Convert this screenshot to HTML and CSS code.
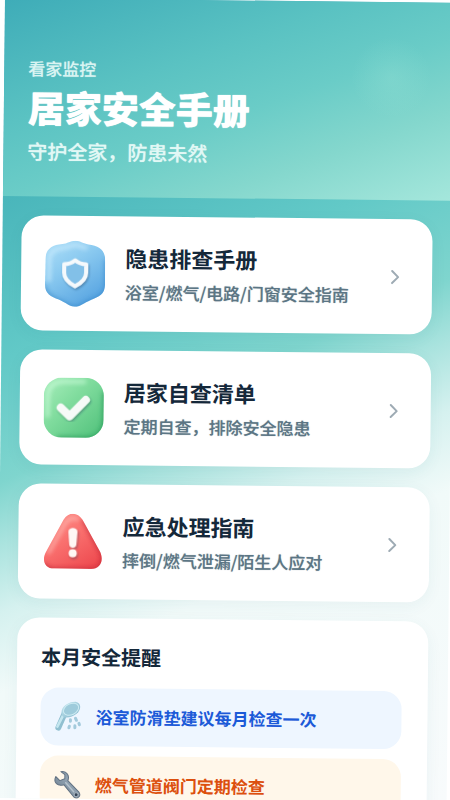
FILE: index.html
```html
<!DOCTYPE html>
<html lang="zh-CN">
<head>
<meta charset="utf-8">
<meta name="viewport" content="width=device-width, initial-scale=1">
<title>居家安全手册</title>
<link rel="stylesheet" href="styles.css">
</head>
<body>
<div class="page">
  <header class="hero">
    <p class="hero-brand">看家监控</p>
    <h1 class="hero-title">居家安全手册</h1>
    <p class="hero-sub">守护全家，防患未然</p>
  </header>
  <main class="content">
    <a class="card guide" href="#hazards">
      <svg class="guide-icon" viewBox="0 0 60 68" aria-hidden="true">
        <defs>
          <linearGradient id="blueFace" x1="0" y1="0" x2=".6" y2="1"><stop offset="0" stop-color="#b0e0f9"/><stop offset=".45" stop-color="#8bcaf0"/><stop offset="1" stop-color="#5aa6e2"/></linearGradient>
          <filter id="soft" x="-20%" y="-20%" width="140%" height="140%"><feGaussianBlur stdDeviation="2"/></filter>
          <filter id="drop" x="-30%" y="-30%" width="160%" height="160%"><feDropShadow dx="1" dy="1.5" stdDeviation=".8" flood-color="#123456" flood-opacity=".4"/></filter>
          <clipPath id="shieldClip"><path d="M30 1C35 1 38 4 43 4.500C54 5.500 60 10 60 21V45C60 54 54 57 46 60C39 63 35 67 30 67C25 67 21 63 14 60C6 57 0 54 0 45V21C0 10 6 5.500 17 4.500C22 4 25 1 30 1Z"/></clipPath>
        </defs>
        <g clip-path="url(#shieldClip)">
          <rect width="60" height="68" fill="url(#blueFace)"/>
          <path d="M61 20V45C61 55 54 58 46 61C39 64 35 68 30 68C25 68 21 64 14 61C6 58 0 54-1 46" fill="none" stroke="#2f80c4" stroke-width="4" opacity=".55" filter="url(#soft)"/>
          <path d="M4 42V21C4 12 10 9 18 8.500L30 5L42 8.500" fill="none" stroke="#d3f0ff" stroke-width="4" opacity=".6" filter="url(#soft)"/>
        </g>
        <path d="M30 20.500C33.500 23.500 37 24.500 41 24.500V33C41 40 36 43.500 30 46.500C24 43.500 19 40 19 33V24.500C23 24.500 26.500 23.500 30 20.500Z" fill="#82c0e8" stroke="#f5f9fc" stroke-width="4" stroke-linejoin="round" filter="url(#drop)"/>
      </svg>
      <span class="guide-text"><strong class="guide-title">隐患排查手册</strong><span class="guide-sub">浴室/燃气/电路/门窗安全指南</span></span>
      <svg class="chevron" viewBox="0 0 28 28" aria-hidden="true"><path d="M12 8L18 14L12 20"/></svg>
    </a>
    <a class="card guide" href="#checklist">
      <svg class="guide-icon" viewBox="0 0 60 68" aria-hidden="true">
        <defs>
          <linearGradient id="greenFace" x1="0" y1="0" x2="1" y2="1"><stop offset="0" stop-color="#a8eebc"/><stop offset=".4" stop-color="#82dd9f"/><stop offset="1" stop-color="#4fc07a"/></linearGradient>
          <clipPath id="tileClip"><rect y="4" width="60" height="60" rx="18"/></clipPath>
        </defs>
        <g clip-path="url(#tileClip)">
          <rect y="4" width="60" height="60" fill="url(#greenFace)"/>
          <path d="M61 18V46Q61 65 42 65H14" fill="none" stroke="#1f9150" stroke-width="5" opacity=".6" filter="url(#soft)"/>
          <path d="M4 44V24Q4 8 20 8H42" fill="none" stroke="#d3ffe0" stroke-width="4" opacity=".6" filter="url(#soft)"/>
        </g>
        <path d="M17 34L26 42.500L42 26" fill="none" stroke="#f6faf8" stroke-width="8" stroke-linecap="round" stroke-linejoin="round" filter="url(#drop)"/>
      </svg>
      <span class="guide-text"><strong class="guide-title">居家自查清单</strong><span class="guide-sub">定期自查，排除安全隐患</span></span>
      <svg class="chevron" viewBox="0 0 28 28" aria-hidden="true"><path d="M12 8L18 14L12 20"/></svg>
    </a>
    <a class="card guide" href="#emergency">
      <svg class="guide-icon" viewBox="0 0 60 68" aria-hidden="true">
        <defs>
          <linearGradient id="redFace" x1="0" y1="0" x2=".6" y2="1"><stop offset="0" stop-color="#ff9c94"/><stop offset=".5" stop-color="#fa7270"/><stop offset="1" stop-color="#ee4b50"/></linearGradient>
          <clipPath id="warnClip"><path d="M21 12C26 4 35 4 40 12L58 44C62 53 58 61 49 61H12C3 61-1 53 4 44Z"/></clipPath>
        </defs>
        <g clip-path="url(#warnClip)">
          <rect width="60" height="68" fill="url(#redFace)"/>
          <path d="M41 12L59 44C63 53 58 62 49 62H12C6 62 3 59 2 56" fill="none" stroke="#b81f2f" stroke-width="4" opacity=".6" filter="url(#soft)"/>
          <path d="M6 46L23 15Q29 8 36 12" fill="none" stroke="#ffd0c9" stroke-width="3" opacity=".65" filter="url(#soft)"/>
        </g>
        <g fill="#fff7f5" filter="url(#drop)"><path d="M26 24C26 19 35 19 35 24L34 37C33.500 41 27.500 41 27 37Z"/><circle cx="30.500" cy="45.500" r="4"/></g>
      </svg>
      <span class="guide-text"><strong class="guide-title">应急处理指南</strong><span class="guide-sub">摔倒/燃气泄漏/陌生人应对</span></span>
      <svg class="chevron" viewBox="0 0 28 28" aria-hidden="true"><path d="M12 8L18 14L12 20"/></svg>
    </a>
    <section class="card reminders">
      <h2 class="reminders-title">本月安全提醒</h2>
      <ul class="tips">
        <li class="tip tip-blue">
          <svg class="tip-icon" viewBox="0 0 32 32" aria-hidden="true">
            <defs><linearGradient id="showerFace" x1="0" y1="0" x2="1" y2="1"><stop offset="0" stop-color="#c6e8f1"/><stop offset="1" stop-color="#82b5ca"/></linearGradient></defs>
            <path d="M11 13L5 27" stroke="#90bfd0" stroke-width="6" stroke-linecap="round"/>
            <path d="M10 14L4 26" stroke="#c4e6ef" stroke-width="2.500" stroke-linecap="round"/>
            <path d="M8 13C7 6 15 1 22 1C28 2 28 9 23 13C18 17 9 19 8 13Z" fill="url(#showerFace)"/>
            <ellipse cx="17.500" cy="8.500" rx="8" ry="5.500" transform="rotate(-26 17.500 8.500)" fill="#9ecbdb" stroke="#cdebf2" stroke-width="1"/>
            <g stroke="#a3cadc" stroke-width="3" stroke-linecap="round"><path d="M17 19L17 20.500M22 17.500L23 19.500M16 25.500L15.500 27M21.500 25L21.500 27M25.500 22.500L26 24"/></g>
          </svg>
          <span>浴室防滑垫建议每月检查一次</span>
        </li>
        <li class="tip tip-orange">
          <svg class="tip-icon" viewBox="0 0 32 32" aria-hidden="true">
            <defs><linearGradient id="steel" x1="0" y1="1" x2="1" y2="0"><stop offset="0" stop-color="#66798a"/><stop offset=".6" stop-color="#92a3b2"/><stop offset="1" stop-color="#6b7e8f"/></linearGradient></defs>
            <path d="M3 8L7 12L12 10L12 6L8 3C14 2 17 7 15 12L26 23C29 27 25 31 21 28L11 16C5 18 0 14 3 8Z" fill="url(#steel)" stroke="#617182" stroke-width="1" stroke-linejoin="round"/>
            <path d="M13 14L21 23" stroke="#b5c2cc" stroke-width="1.500" stroke-linecap="round"/>
            <circle cx="23.500" cy="26" r="2" fill="#354456" stroke="#a2afba" stroke-width="1"/>
          </svg>
          <span>燃气管道阀门定期检查</span>
        </li>
      </ul>
    </section>
  </main>
</div>
</body>
</html>
```
FILE: styles.css
```css
* {
  box-sizing: border-box;
}

body {
  margin: 0;
  overflow: hidden;
  background: #fff;
  color: #14283a;
  font-family: "Noto Sans CJK SC", "Noto Sans", sans-serif;
}

/* The whole sheet lies slightly tilted on a white ground. */
.page {
  height: 100vh;
  overflow: hidden;
  background: linear-gradient(155deg, #3aa8b5 0%, #4ab6bb 20%, #62c9c7 36%, #7fd5ce 48%, #a9e3de 54%, #d5f1ef 61%, #f1faf9 69%, #f8fbfc 100%);
  transform: translate(5px, -2px) rotate(0.6deg);
  transform-origin: 0 0;
}

.hero {
  padding: 56px 24px 28px;
  color: #fff;
  background:
    radial-gradient(circle at 86% 38%, rgba(160, 232, 218, 0.25), rgba(160, 232, 218, 0) 40px),
    linear-gradient(160deg, #3eacb8 0%, #5ac2c2 35%, #6accc7 55%, #84d7cd 75%, #a5e7dc 100%);
}

.hero p,
.hero h1 {
  margin: 0;
}

.hero-brand {
  font-size: 17px;
  line-height: 28px;
  font-weight: 500;
  color: #d9f4f2;
  text-shadow: 0 0 1px rgba(217, 244, 242, 0.6);
}

.hero-title {
  font-size: 37px;
  line-height: 48px;
  font-weight: 900;
  text-shadow: 0 0 1px #fff;
}

.hero .hero-sub {
  margin-top: 4px;
  font-size: 20px;
  line-height: 34px;
  font-weight: 500;
  color: #e2f8f5;
  text-shadow: 0 0 1px rgba(226, 248, 245, 0.7);
}

.content {
  display: flex;
  flex-direction: column;
  gap: 19px;
  padding: 19px 20px 19px 19px;
}

.card {
  border-radius: 22px;
  background: #fff;
  box-shadow: 0 4px 16px rgba(30, 110, 120, 0.06);
}

.guide {
  display: flex;
  align-items: center;
  gap: 20px;
  min-height: 115px;
  padding: 20px 24px;
  color: inherit;
  text-decoration: none;
}

.guide-icon {
  flex: none;
  width: 60px;
  height: 68px;
}

.guide-text {
  display: flex;
  flex: 1;
  flex-direction: column;
  gap: 6px;
  white-space: nowrap;
}

.guide-title {
  font-size: 22px;
  line-height: 30px;
  font-weight: 700;
}

.guide-sub {
  font-size: 17px;
  line-height: 28px;
  font-weight: 500;
  color: #5b7584;
  text-shadow: 0 0 1px rgba(91, 117, 132, 0.6);
}

.chevron {
  flex: none;
  width: 28px;
  height: 28px;
  fill: none;
  stroke: #9eabb4;
  stroke-width: 2;
  stroke-linecap: round;
  stroke-linejoin: round;
}

.reminders {
  padding: 24px 26px 24px 24px;
}

.reminders-title {
  margin: 0 0 16px;
  font-size: 20px;
  line-height: 30px;
  font-weight: 700;
}

.tips {
  display: flex;
  flex-direction: column;
  gap: 10px;
  margin: 0;
  padding: 0;
  list-style: none;
}

.tip {
  display: flex;
  align-items: center;
  gap: 10px;
  min-height: 58px;
  padding: 12px 13px;
  border-radius: 18px;
  font-size: 17px;
  line-height: 28px;
  font-weight: 700;
}

.tip-blue {
  background: #eef6ff;
  color: #1c5ad8;
}

.tip-orange {
  background: #fff7ea;
  color: #dc4f0d;
}

.tip-icon {
  flex: none;
  width: 32px;
  height: 32px;
}
```
